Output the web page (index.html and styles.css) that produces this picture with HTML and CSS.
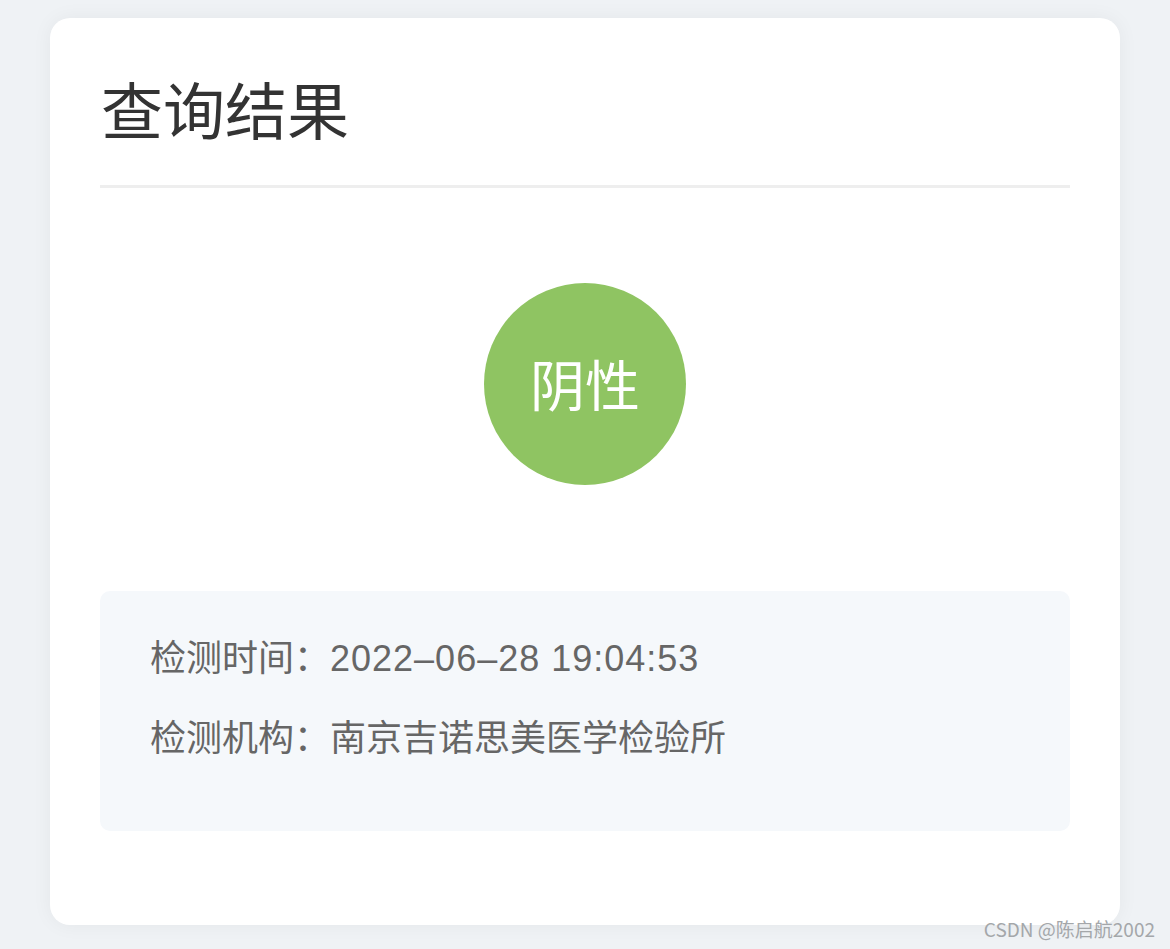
FILE: index.html
```html
<!DOCTYPE html>
<html lang="zh-CN">
<head>
    <meta charset="UTF-8">
    <meta name="viewport" content="width=device-width, initial-scale=1.0">
    <title>查询结果</title>
    <link rel="stylesheet" href="styles.css">
</head>
<body>
    <div class="card">
        <h1 class="title">查询结果</h1>

        <div class="result">
            <div class="badge">阴性</div>
        </div>

        <div class="info">
            <p class="info-row">检测时间：<span class="date">2022–06–28 19:04:53</span></p>
            <p class="info-row">检测机构：南京吉诺思美医学检验所</p>
        </div>
    </div>

    <div class="watermark">CSDN @陈启航2002</div>
</body>
</html>
```

FILE: styles.css
```css
body {
    margin: 0;
    padding: 18px 0 0 50px;
    height: 949px;
    box-sizing: border-box;
    background-color: #eff2f5;
    font-family: "Noto Sans CJK SC", "Noto Sans", sans-serif;
    overflow: hidden;
}

.card {
    width: 1070px;
    height: 907px;
    box-sizing: border-box;
    padding: 0 50px;
    background-color: #fff;
    border-radius: 20px;
    box-shadow: 0 0 20px rgba(0, 0, 0, 0.05);
}

.title {
    margin: 0;
    padding: 59px 0 46px 1px;
    font-size: 62px;
    line-height: 62px;
    font-weight: 400;
    color: #333;
    border-bottom: 3px solid #eeeeee;
}

.result {
    display: flex;
    justify-content: center;
    padding: 95px 0 106px;
}

.badge {
    width: 202px;
    height: 202px;
    border-radius: 50%;
    background-color: #8fc462;
    color: #fff;
    font-size: 55px;
    line-height: 1;
    padding-bottom: 4px;
    box-sizing: border-box;
    display: flex;
    align-items: center;
    justify-content: center;
}

.info {
    height: 240px;
    box-sizing: border-box;
    padding: 44px 50px 0;
    background-color: #f5f8fb;
    border-radius: 10px;
    display: flex;
    flex-direction: column;
    gap: 40px;
}

.info-row {
    margin: 0;
    height: 40px;
    font-size: 36px;
    line-height: 40px;
    color: #666;
}

.date {
    font-family: "Liberation Sans", "Noto Sans CJK SC", sans-serif;
    letter-spacing: 1px;
}

.watermark {
    position: absolute;
    right: 15px;
    bottom: 7px;
    font-size: 19px;
    color: #a4a7aa;
}
```
